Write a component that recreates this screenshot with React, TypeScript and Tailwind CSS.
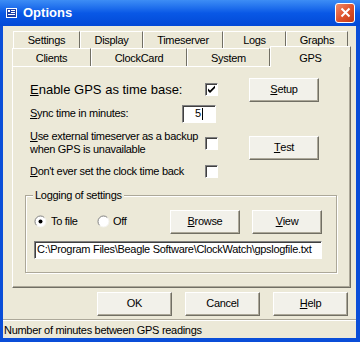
import type { ReactNode } from "react"

const ui = "font-['Liberation_Sans',Arial,sans-serif] text-[11px] tracking-[-0.3px] text-black"

function Btn({ children, className = "" }: { children: ReactNode; className?: string }) {
  return (
    <div
      className={`flex h-[24px] w-[70px] items-center justify-center border border-t-white border-l-white border-b-[#716F64] border-r-[#716F64] bg-[#F2F1EA] shadow-[inset_-1px_-1px_0_#ACA899] ${className}`}
    >
      {children}
    </div>
  )
}

function Check({ checked = false }: { checked?: boolean }) {
  return (
    <div className="flex h-[13px] w-[13px] shrink-0 items-center justify-center border border-t-[#808080] border-l-[#808080] border-b-white border-r-white bg-white shadow-[inset_1px_1px_0_#404040]">
      {checked && (
        <svg width="9" height="9" viewBox="0 0 9 9">
          <path d="M1 3.5 L3 5.5 L8 0.5 L8 3 L3 8 L1 6 Z" fill="#000" />
        </svg>
      )}
    </div>
  )
}

function Radio({ on = false }: { on?: boolean }) {
  return (
    <svg width="13" height="13" viewBox="0 0 13 13" className="shrink-0">
      <circle cx="6.5" cy="6.5" r="5.5" fill="#fff" />
      <path d="M2.6 10.4 A5.5 5.5 0 0 1 10.4 2.6" stroke="#808080" fill="none" strokeWidth="1" />
      <path d="M10.4 2.6 A5.5 5.5 0 0 1 2.6 10.4" stroke="#F4F3EE" fill="none" strokeWidth="1" />
      {on && <circle cx="6.5" cy="6.5" r="2" fill="#000" />}
    </svg>
  )
}

function Tab({ label, w }: { label: string; w: string }) {
  return (
    <div
      className={`flex h-full items-center justify-center border-t border-l border-r border-t-white border-l-white border-r-[#716F64] pt-[2px] ${w}`}
    >
      {label}
    </div>
  )
}

export default function App() {
  return (
    <div className={`flex h-[342px] w-[360px] flex-col bg-[#0A4ED8] ${ui}`}>
      {/* title bar */}
      <div className="flex h-[26px] items-center bg-gradient-to-b from-[#3D8DF5] via-[#0958E6] to-[#0349D6] pl-[6px] pr-[5px]">
        <svg width="11" height="10" viewBox="0 0 11 10" className="mr-[6px]">
          <rect x="0.5" y="0.5" width="10" height="9" fill="#1C3FA8" stroke="#fff" />
          <rect x="2" y="2" width="2" height="2" fill="#fff" />
          <rect x="5" y="2" width="4" height="1" fill="#fff" />
          <rect x="5" y="4" width="4" height="1" fill="#fff" />
          <rect x="2" y="6" width="7" height="1" fill="#fff" />
        </svg>
        <div className="text-[13px] font-bold tracking-normal text-white">
          Options
        </div>
        <div className="ml-auto flex h-[20px] w-[20px] items-center justify-center rounded-[3px] border border-white bg-gradient-to-br from-[#F08A6B] via-[#E0532C] to-[#C23A14]">
          <svg width="11" height="11" viewBox="0 0 11 11">
            <path d="M1.5 1.5 L9.5 9.5 M9.5 1.5 L1.5 9.5" stroke="#fff" strokeWidth="2" />
          </svg>
        </div>
      </div>

      {/* body */}
      <div className="ml-[3px] mr-[4px] flex flex-1 flex-col bg-[#ECE9D8]">
        <div className="pl-[9px] pr-[5px] pt-[5px]">
          <div className="ml-[1px] flex h-[17px]">
            <Tab label="Settings" w="w-[67px]" />
            <Tab label="Display" w="w-[63px]" />
            <Tab label="Timeserver" w="w-[80px]" />
            <Tab label="Logs" w="w-[63px]" />
            <Tab label="Graphs" w="w-[62px]" />
          </div>
          <div className="flex h-[18px] items-end">
            <Tab label="Clients" w="w-[79px]" />
            <Tab label="ClockCard" w="w-[96px]" />
            <Tab label="System" w="w-[83px]" />
            <div className="relative z-10 -mb-[1px] flex h-[21px] w-[81px] items-start justify-center border-t border-l border-r border-t-white border-l-white border-r-[#716F64] bg-[#ECE9D8] pt-[3px]">
              GPS
            </div>
          </div>

          {/* panel */}
          <div className="h-[222px] border border-t-white border-l-white border-b-[#716F64] border-r-[#716F64] pl-[12px] pt-[11px] shadow-[inset_-1px_-1px_0_#ACA899]">
            <div className="ml-[5px] flex h-[24px] items-center">
              <div className="w-[175px] text-[13px] tracking-normal">
                <span className="underline">E</span>nable GPS as time base:
              </div>
              <Check checked />
              <Btn className="ml-[31px]">
                <span className="underline">S</span>etup
              </Btn>
            </div>

            <div className="ml-[5px] mt-[3px] flex h-[18px] items-center">
              <div className="w-[152px]">
                <span className="underline">S</span>ync time in minutes:
              </div>
              <div className="flex h-[18px] w-[34px] items-center justify-center border border-t-[#808080] border-l-[#808080] border-b-white border-r-white bg-white shadow-[inset_1px_1px_0_#404040]">
                5<span className="ml-[1px] inline-block h-[12px] w-px bg-black" />
              </div>
            </div>

            <div className="ml-[5px] mt-[7px] flex items-start">
              <div className="w-[175px] leading-[13px]">
                <span className="underline">U</span>se external timeserver as a backup
                <br />
                when GPS is unavailable
              </div>
              <div className="mt-[7px]">
                <Check />
              </div>
              <Btn className="ml-[31px] mt-[6px]">
                <span className="underline">T</span>est
              </Btn>
            </div>

            <div className="ml-[5px] mt-[5px] flex h-[14px] items-center">
              <div className="w-[175px]">
                <span className="underline">D</span>on't ever set the clock time back
              </div>
              <Check />
            </div>

            {/* group box */}
            <div className="relative mt-[16px] w-[312px] border border-[#ACA899] pb-[13px] pl-[8px] pt-[14px] shadow-[inset_1px_1px_0_#fff,1px_1px_0_#fff]">
              <div className="absolute -top-[7px] left-[7px] bg-[#ECE9D8] px-[2px] leading-[13px]">
                Logging of settings
              </div>
              <div className="flex h-[24px] items-center">
                <div className="flex w-[63px] items-center gap-[4px]">
                  <Radio on />
                  <span>To file</span>
                </div>
                <div className="flex w-[73px] items-center gap-[3px]">
                  <Radio />
                  <span>Off</span>
                </div>
                <Btn>
                  <span className="underline">B</span>rowse
                </Btn>
                <Btn className="ml-[12px]">
                  <span className="underline">V</span>iew
                </Btn>
              </div>
              <div className="mt-[7px] flex h-[18px] w-[288px] items-center overflow-hidden whitespace-nowrap border border-t-[#808080] border-l-[#808080] border-b-white border-r-white bg-white pl-[2px] shadow-[inset_1px_1px_0_#404040]">
                C:\Program Files\Beagle Software\ClockWatch\gpslogfile.txt
              </div>
            </div>
          </div>

          {/* dialog buttons */}
          <div className="mt-[4px] flex justify-end gap-[13px] pr-[3px]">
            <Btn className="w-[75px]">OK</Btn>
            <Btn className="w-[75px]">Cancel</Btn>
            <Btn className="w-[75px]">
              <span className="underline">H</span>elp
            </Btn>
          </div>
        </div>

        {/* status bar */}
        <div className="mt-[3px] flex flex-1 items-center border-t border-t-[#ACA899] pl-[1px] pt-[2px] shadow-[inset_0_1px_0_#fff]">
          Number of minutes between GPS readings
        </div>
      </div>
      <div className="h-[4px]" />
    </div>
  )
}
